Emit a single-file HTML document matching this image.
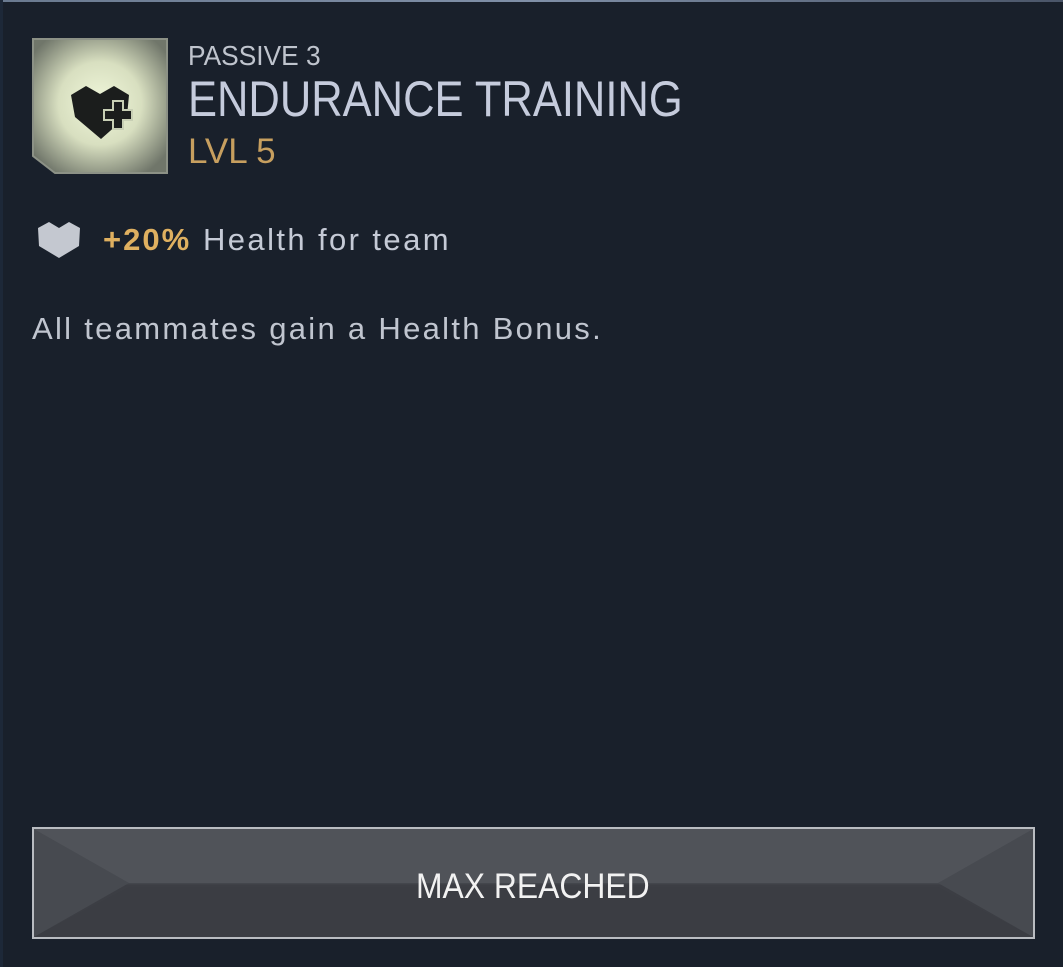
<!DOCTYPE html>
<html><head><meta charset="utf-8"><style>
html,body{margin:0;padding:0}
body{width:1063px;height:967px;background:#19202b;position:relative;overflow:hidden;font-family:"Liberation Sans",sans-serif}
.topline{position:absolute;left:0;top:0;width:1063px;height:2px;background:linear-gradient(90deg,#6a7a90,#8090a8 50%,#4a5568)}
.leftline{position:absolute;left:0;top:0;width:3px;height:967px;background:#1d2838}
.t{position:absolute;white-space:nowrap;transform-origin:0 0;line-height:1}
.iconbox{position:absolute;left:32px;top:38px;width:136px;height:136px}
.btn{position:absolute;left:32px;top:827px;width:1003px;height:112px;box-sizing:border-box;border:2px solid #b9bcc1;background:linear-gradient(#4f5258 0,#4f5258 48%,#3c3e44 52%,#3c3e44 100%);overflow:hidden}
</style></head><body>
<div class="topline"></div><div class="leftline"></div>
<svg class="iconbox" width="136" height="136" viewBox="0 0 136 136">
<defs><radialGradient id="g" cx="50%" cy="48%" r="62%"><stop offset="0" stop-color="#f0f7da"/><stop offset="0.5" stop-color="#d8dfc0"/><stop offset="1" stop-color="#70766a"/></radialGradient></defs>
<polygon points="1,1 135,1 135,135 23,135 1,118" fill="url(#g)" stroke="#8c9186" stroke-width="2"/>
<path d="M39,57 L54,48 L68,56 L82,48 L97,57 L95,78 L69,101 L43,79 Z" fill="#1b1d1c"/>
<path d="M72,72 h9 v-9 h10 v9 h9 v10 h-9 v9 h-10 v-9 h-9 Z" fill="#1b1d1c" stroke="#c8cfb4" stroke-width="2"/>
</svg>
<div class="t" style="left:188px;top:42px;font-size:28px;color:#bfc4cd;transform:scaleX(0.94)">PASSIVE 3</div>
<div class="t" style="left:188px;top:74px;font-size:50px;color:#c5cbdc;transform:scaleX(0.87)">ENDURANCE TRAINING</div>
<div class="t" style="left:188px;top:134px;font-size:35px;color:#c79f5f">LVL 5</div>
<svg style="position:absolute;left:37px;top:221px" width="44" height="38" viewBox="0 0 44 38"><path d="M1,7 L12,1 L22,7 L32,1 L43,7 L42,25 L22,37 L2,25 Z" fill="#c4c8d0"/></svg>
<div class="t" style="left:103px;top:224px;font-size:31px;color:#dfb060;font-weight:bold;letter-spacing:2px">+20%</div>
<div class="t" style="left:203px;top:224px;font-size:31px;color:#c5cad6;letter-spacing:2.4px">Health for team</div>
<div class="t" style="left:32px;top:313px;font-size:31px;color:#c0c5cf;letter-spacing:2.3px">All teammates gain a Health Bonus.</div>
<div class="btn">
<svg style="position:absolute;left:0;top:0" width="999" height="108" viewBox="0 0 999 108"><polygon points="0,0 95,54 0,108" fill="#474a50"/><polygon points="999,0 904,54 999,108" fill="#474a50"/><polygon points="0,0 999,0 904,54 95,54" fill="#505359"/><polygon points="0,108 999,108 904,58 95,58" fill="#3b3d43"/></svg>
<div class="t" style="left:382px;top:40px;font-size:35px;color:#f2f2f2;transform:scaleX(0.91)">MAX REACHED</div>
</div>
</body></html>
